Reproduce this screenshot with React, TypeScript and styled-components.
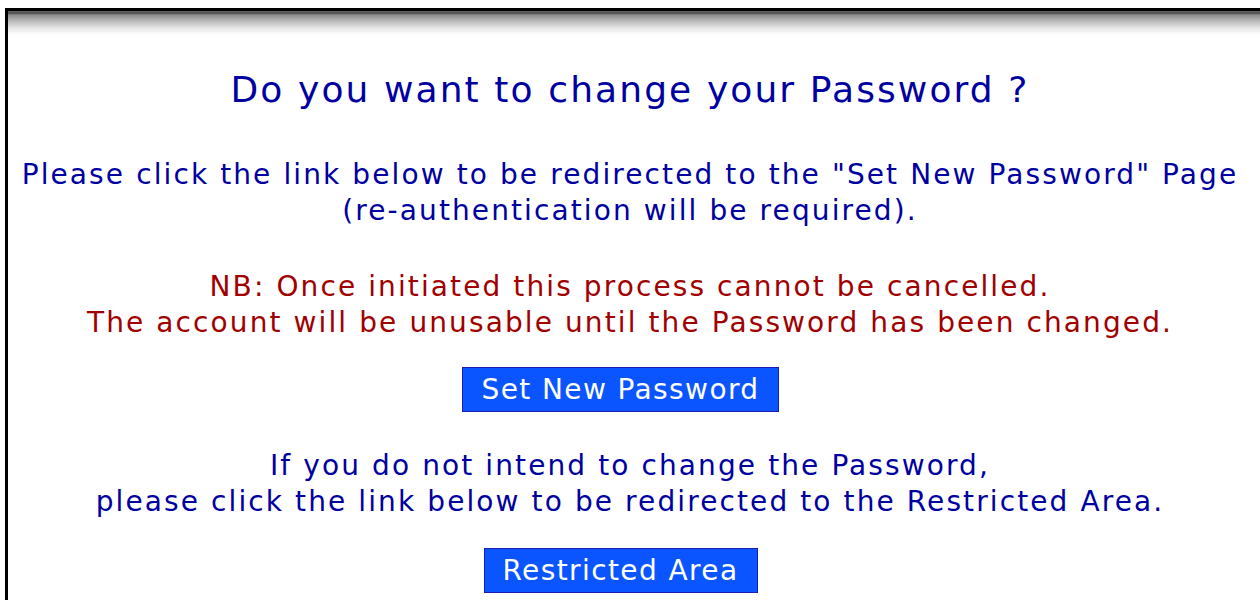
import styled, { createGlobalStyle } from "styled-components";

const GlobalStyle = createGlobalStyle`
  html, body {
    margin: 0;
    padding: 0;
    background: #ffffff;
  }
`;

function App() {
  return (
    <>
      <GlobalStyle />
      <Frame>
        <Panel>
          <Title>Do you want to change your Password ?</Title>
          <Message $gap={45}>
            Please click the link below to be redirected to the "Set New Password" Page
            <br />
            (re-authentication will be required).
          </Message>
          <Message $gap={40} $warning>
            NB: Once initiated this process cannot be cancelled.
            <br />
            The account will be unusable until the Password has been changed.
          </Message>
          <ActionButton type="button" $gap={26}>
            Set New Password
          </ActionButton>
          <Message $gap={36}>
            If you do not intend to change the Password,
            <br />
            please click the link below to be redirected to the Restricted Area.
          </Message>
          <ActionButton type="button" $gap={28}>
            Restricted Area
          </ActionButton>
        </Panel>
      </Frame>
    </>
  );
}

export default App;

const Frame = styled.div`
  margin: 8px 0 0 5px;
  border-top: 3px solid #000000;
  border-left: 3px solid #000000;
  height: 600px;
  background: linear-gradient(
    to bottom,
    #6a6a6a 0px,
    #4a4a4a 2px,
    #8c8c8c 4px,
    #b9b9b9 10px,
    #e6e6e6 17px,
    #fcfcfc 23px,
    #ffffff 26px
  );
`;

const Panel = styled.div`
  display: flex;
  flex-direction: column;
  align-items: center;
  padding-top: 57px;
  margin-left: -8px;
  font-family: Verdana, "DejaVu Sans", sans-serif;
  text-align: center;
`;

const Title = styled.h1`
  margin: 0;
  font-size: 36px;
  font-weight: 400;
  line-height: 44px;
  letter-spacing: 2.1px;
  color: #0000a0;
`;

const Message = styled.p<{ $gap: number; $warning?: boolean }>`
  margin: ${(p) => p.$gap}px 0 0;
  font-size: 28px;
  line-height: 36px;
  letter-spacing: 2.1px;
  white-space: nowrap;
  color: ${(p) => (p.$warning ? "#a00000" : "#0000a0")};
`;

const ActionButton = styled.button<{ $gap: number }>`
  margin: ${(p) => p.$gap}px 19px 0 0;
  padding: 0 18px;
  height: 45px;
  border: 1px solid #1c1cb0;
  background: #0a55ff;
  color: #ffffff;
  font-family: Verdana, "DejaVu Sans", sans-serif;
  font-size: 28px;
  letter-spacing: 1.4px;
  cursor: pointer;
`;
